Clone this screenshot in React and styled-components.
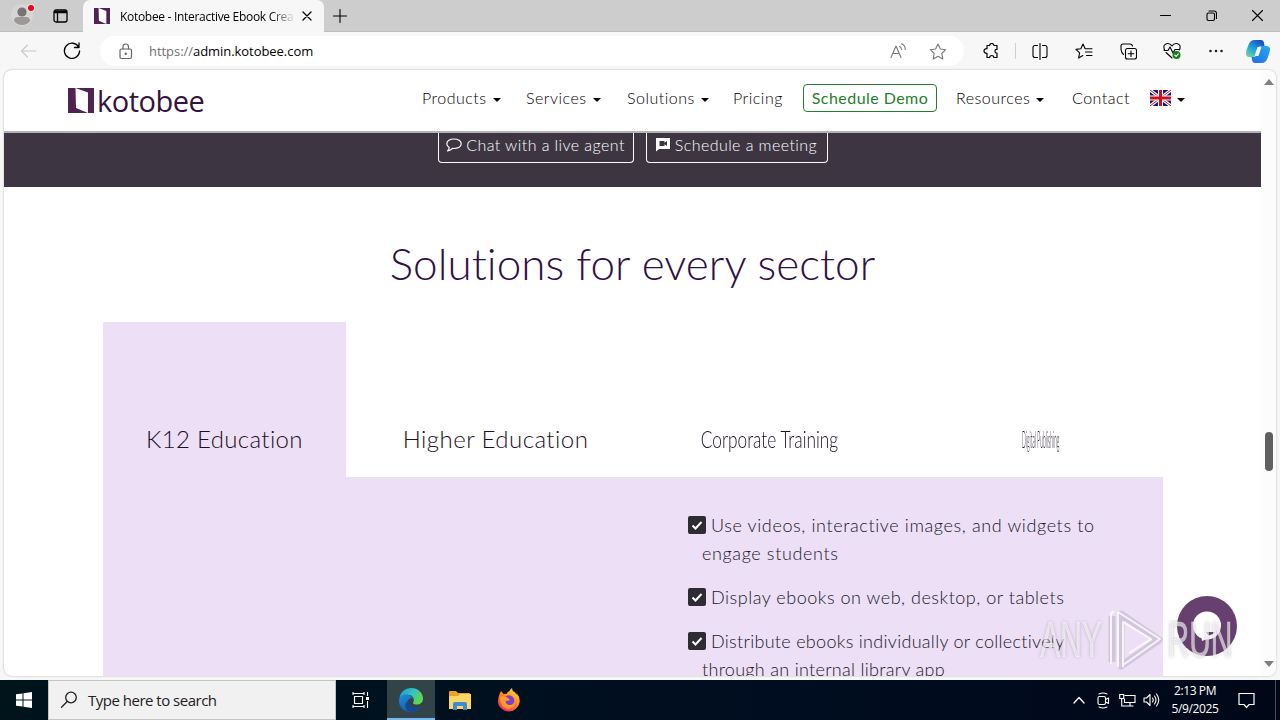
import React from "react";
import styled, { createGlobalStyle } from "styled-components";

const tabs = [
  { label: "K12 Education", width: 243, spacing: 0.35, active: true },
  { label: "Higher Education", width: 299, spacing: 0.45 },
  { label: "Corporate Training", width: 248, spacing: 0, scale: 0.72 },
  { label: "Digital Publishing", width: 296, spacing: 0, scale: 0.21 },
];

const features = [
  { text: "Use videos, interactive images, and widgets to engage students", spacing: 0.62 },
  { text: "Display ebooks on web, desktop, or tablets", spacing: 0.53 },
  {
    text: "Distribute ebooks individually or collectively through an internal library app",
    spacing: 0.3,
  },
];

const Icon = ({ w = 18, h = w, box = `0 0 ${w} ${h}`, children, ...rest }) => (
  <svg
    width={w}
    height={h}
    viewBox={box}
    fill="none"
    stroke="currentColor"
    strokeWidth="1.1"
    strokeLinecap="round"
    strokeLinejoin="round"
    {...rest}
  >
    {children}
  </svg>
);

const BookMark = ({ w, h }) => (
  <svg width={w} height={h} viewBox="0 0 26 25" preserveAspectRatio="none">
    <path fill="#512353" d="M0 0h26v25H0z" />
    <path fill="#fff" d="M7.500 0L20 4.500V25L8 20z" />
  </svg>
);

const TabStrip = () => (
  <Strip>
    <ProfileSlot>
      <Icon w={24} stroke="none">
        <circle cx="11" cy="11" r="11" fill="#d9d5d4" />
        <circle cx="11" cy="8" r="4.600" fill="#777473" />
        <path d="M3 17q0-4 4-4h8q4 0 4 4-3 4-8 4t-8-4z" fill="#9b9897" />
        <circle cx="20" cy="4" r="4" fill="#e9dede" />
        <circle cx="20" cy="4" r="3" fill="#e00b1c" />
      </Icon>
    </ProfileSlot>
    <Icon w={15} h={14} strokeWidth="1.300">
      <rect x="1" y="1" width="13" height="12" rx="2" />
      <path d="M1.500 2.500h12M1.500 3.500h12M4.500 3v10" />
    </Icon>
    <ActiveTab>
      <BookMark w={16} h={16} />
      <TabTitle>Kotobee - Interactive Ebook Crea</TabTitle>
      <Icon w={10} strokeWidth="1.300">
        <path d="M1 1l8 8M9 1L1 9" />
      </Icon>
    </ActiveTab>
    <Icon w={14}>
      <path d="M7 .5v13M.5 7h13" />
    </Icon>
    <WindowButtons>
      <Icon w={11}>
        <path d="M.5 5.500h10" />
      </Icon>
      <Icon w={11}>
        <rect x="1" y="3" width="7.500" height="7.500" rx="1.500" />
        <path d="M3 1h5q2.500 0 2.500 2.500v5" />
      </Icon>
      <Icon w={11}>
        <path d="M.5.5l10 10M10.500.5l-10 10" />
      </Icon>
    </WindowButtons>
  </Strip>
);

const AddressBar = () => (
  <Toolbar>
    <BackSlot>
      <Icon w={17} h={14} stroke="#c8c8c8">
        <path d="M16 7H1.500M7.500 1L1.500 7l6 6" />
      </Icon>
    </BackSlot>
    <Icon w={18} strokeWidth="1.300">
      <path d="M15.700 5.200A7.600 7.600 0 1 0 16.600 9M16 1v4.500h-4.500" />
    </Icon>
    <Pill>
      <Icon w={14} h={17} stroke="#666" strokeWidth="1.200">
        <rect x="1" y="6" width="11.500" height="9.500" rx="1.500" />
        <path d="M4 6V4q0-3 2.750-3T9.500 4v2" />
        <circle cx="6.750" cy="10.800" r=".6" fill="#666" />
      </Icon>
      <Url>
        <span>https://</span>admin.kotobee.com
      </Url>
      <PillActions>
        <Icon w={17} h={16} stroke="#777">
          <path d="M1 14.500L6 3l5 11.500M2.800 10.500h6.400M9.500 3.300q2 1 2 3.200M11.500.8q4 1.800 3.700 5.700" />
        </Icon>
        <Icon w={18} h={17} stroke="#777">
          <path d="M9 1l2.400 5 5.300.7-3.900 3.800 1 5.400L9 13.300 4.200 15.900l1-5.400L1.300 6.700 6.600 6z" />
        </Icon>
      </PillActions>
    </Pill>
    <Actions>
      <Icon w={17} strokeWidth="1.200">
        <path d="M4 2.500h2.500q.5-2 2.300-2t2.200 2H14v4q-2-.3-2 1.700t2 1.800v4.500h-3q-.5-2-2.200-2t-2.300 2H4v-4.200q-3 0-3-2.300t3-2.300z" />
      </Icon>
      <Divider />
      <Icon w={16} h={17}>
        <path d="M8 .5v16M5.500 2.500H3q-2 0-2 2v8q0 2 2 2h2.500M10.500 2.500H13q2 0 2 2v8q0 2-2 2h-2.500" />
      </Icon>
      <Icon w={18} h={16}>
        <path d="M10 5.500L8 1 5.800 5.700 1 6.400l3.600 3.400-1 5.200 4.200-2.400M10.500 5.700H17M10.500 9H17M11.500 12.500H17" />
      </Icon>
      <Icon w={17}>
        <rect x="5.500" y="5.500" width="11" height="10.500" rx="2" />
        <path d="M11 8v5.500M8.200 10.800h5.600M3.500 11.500Q1.500 10 1 6.500V3q0-2 2-2h7q2 0 2.500 2" />
      </Icon>
      <Icon w={18}>
        <path d="M1.500 8Q-.5 2.500 4 1.500q3-.5 5 2.500 2-3 5-2.500 4.500 1 2.500 6.500M3 10.500L9 16M1 8.500h4L7 5l3 6 2-3.500h4" />
        <circle cx="13.500" cy="13" r="4" fill="#15801b" stroke="none" />
        <path d="M11.800 13.200l1.300 1.200 2.200-2.600" stroke="#fff" />
      </Icon>
      <Icon w={14} h={4} fill="#222" stroke="none">
        <circle cx="1.500" cy="2" r="1.300" />
        <circle cx="7" cy="2" r="1.300" />
        <circle cx="12.500" cy="2" r="1.300" />
      </Icon>
    </Actions>
    <Copilot />
  </Toolbar>
);

const Copilot = () => (
  <svg width="24" height="23" viewBox="0 0 24 23">
    <defs>
      <linearGradient id="cpA" x1="0" y1="1" x2=".7" y2="0">
        <stop offset="0" stopColor="#7be08a" />
        <stop offset=".45" stopColor="#27a8dc" />
        <stop offset="1" stopColor="#1453c4" />
      </linearGradient>
      <linearGradient id="cpB" x1="0" y1="1" x2="1" y2="0">
        <stop offset="0" stopColor="#1e6ee8" />
        <stop offset="1" stopColor="#28a8ee" />
      </linearGradient>
    </defs>
    <path fill="url(#cpA)" d="M8 0h7q2.500 0 3 3l.5 3h-4q-2 0-3 3l-1.500 5q-1 3-3 3H4q-4.500 0-4-4 .5-3 2-7Q4 0 8 0z" />
    <path fill="url(#cpB)" d="M16 23H9q-2.500 0-3-3l-.5-3H8q2 0 3-3l1.500-5q1-3 3-3H20q4.500 0 4 4-.5 3-2 7-2 6-6 6z" />
    <path fill="#eefaff" d="M11.500 7h4l-3 9h-4z" />
  </svg>
);

const Flag = () => (
  <svg width="21" height="16" viewBox="0 0 21 16">
    <path fill="#171a75" d="M0 0h21v16H0z" />
    <path stroke="#fff" strokeWidth="3" d="M0 0l21 16M21 0L0 16" />
    <path stroke="#cf1a2b" strokeWidth="1" d="M0 0l21 16M21 0L0 16" />
    <path stroke="#fff" strokeWidth="5" d="M10.500 0v16M0 8h21" />
    <path stroke="#cc1020" strokeWidth="3" d="M10.500 0v16M0 8h21" />
  </svg>
);

const SiteNav = () => (
  <Nav>
    <Brand>
      <BookMark w={26} h={25} />
      <span>kotobee</span>
    </Brand>
    <Menu>
      <NavItem>Products<Caret /></NavItem>
      <NavItem>Services<Caret /></NavItem>
      <NavItem>Solutions<Caret /></NavItem>
      <NavItem>Pricing</NavItem>
      <DemoButton>Schedule Demo</DemoButton>
      <NavItem>Resources<Caret /></NavItem>
      <NavItem>Contact</NavItem>
      <NavItem><Flag /><Caret /></NavItem>
    </Menu>
  </Nav>
);

const CheckBox = () => (
  <CheckSvg width="18" height="18" viewBox="0 0 18 18">
    <rect width="18" height="18" rx="2" fill="#2f2b33" />
    <path d="M4.500 9.500l3 3 6-6.500" fill="none" stroke="#fff" strokeWidth="2" />
  </CheckSvg>
);

const Watermark = () => (
  <Mark>
    <MarkText>ANY</MarkText>
    <svg width="56" height="66" viewBox="0 0 56 66" fill="none" strokeLinejoin="round">
      <g stroke="rgba(110,100,120,.2)" strokeWidth="7">
        <path d="M4 9v46M13 7l38 26-38 26z" />
      </g>
      <path d="M3 57V8q0-3 3-3M10 60V5l42 27-37 26M15 60V15l28 17-22 14" stroke="rgba(255,255,255,.8)" strokeWidth="2" />
    </svg>
    <MarkText>RUN</MarkText>
  </Mark>
);

const Taskbar = () => (
  <Bar>
    <StartButton>
      <svg width="16" height="16" viewBox="0 0 16 16" fill="#fff">
        <path d="M0 2.300L6.500 1.400v6.100H0zM7.500 1.200L16 0v7.500H7.500zM0 8.500h6.500v6.100L0 13.700zM7.500 8.500H16V16l-8.500-1.200z" />
      </svg>
    </StartButton>
    <SearchBox>
      <Icon w={18} strokeWidth="1.300">
        <circle cx="11" cy="6.500" r="5.300" />
        <path d="M7.200 10.500L1.500 16.300" />
      </Icon>
      <span>Type here to search</span>
    </SearchBox>
    <TaskButton>
      <Icon w={17} h={16} strokeLinecap="butt">
        <path d="M1 1.500h11M1 14.500h11M1 0v3M12 0v3M1 13v3M12 13v3M15.500 0v4M15.500 9v7" />
        <rect x="2.500" y="4.500" width="8" height="7" />
        <path d="M14 6.500h3" strokeWidth="3" />
      </Icon>
    </TaskButton>
    <TaskButton $active>
      <svg width="24" height="24" viewBox="0 0 24 24">
        <defs>
          <linearGradient id="eg" x1="0" y1="0" x2="1" y2=".5">
            <stop offset="0" stopColor="#1896d4" />
            <stop offset=".55" stopColor="#35c3c3" />
            <stop offset="1" stopColor="#62d64b" />
          </linearGradient>
          <linearGradient id="eb" x1="0" y1="0" x2=".7" y2="1">
            <stop offset="0" stopColor="#1b8fda" />
            <stop offset="1" stopColor="#1258a8" />
          </linearGradient>
        </defs>
        <path fill="url(#eg)" d="M.5 10C1.500 3.500 6.500 0 12 0c7 0 12 5 12 10.500 0 4-3 6-6.200 6-3.400 0-4.200-1.200-3.500-2.300C16.500 10 12 6 7.500 7 4 7.500 1.500 9 .5 10z" />
        <path fill="url(#eb)" d="M0 13C0 9 3 6.500 7 6.500c4 0 6.500 2.500 7 4.500-3-2-6 1-5 4.500 1.200 4.200 6.500 6 12.500 3.200C19 22 16 24 12 24 5 24 0 19 0 13z" />
        <path fill="#124a91" d="M8.800 12.500c-.8 5 4.500 9.500 12.700 6.200-3 4-7.500 5.700-11 5C5.500 22 5 15.500 8.800 12.500z" />
      </svg>
    </TaskButton>
    <TaskButton>
      <svg width="22" height="19" viewBox="0 0 22 19">
        <path fill="#e8a520" d="M0 1q0-1 1-1h6l2 2h11q1 0 1 1v5H0z" />
        <path fill="#fbd667" d="M0 5h9l2-2h11v15H0z" />
        <path fill="#3b8ecb" d="M4 19v-6q0-2 2-2h10q2 0 2 2v6h-4v-4H8v4z" />
      </svg>
    </TaskButton>
    <TaskButton>
      <svg width="24" height="24" viewBox="0 0 24 24">
        <defs>
          <linearGradient id="fx" x1=".8" y1="0" x2=".2" y2="1">
            <stop offset="0" stopColor="#ffe03a" />
            <stop offset=".45" stopColor="#ff8a1f" />
            <stop offset="1" stopColor="#f5206b" />
          </linearGradient>
        </defs>
        <path fill="url(#fx)" d="M3 5l1-2 2.500 3q2-.5 3 0 .5-2 3-3 1-2 2.500-3 0 3 2.500 4 1 .5 2 3V5q3.500 4 3.200 8.500C22 19 17.500 23.500 12 23.500S1 19 1 13.500Q1 9 3 5z" />
        <circle cx="12" cy="12.500" r="5.200" fill="#7a3fd0" />
        <path fill="#ff9a24" d="M3 9q4-2 8 1l2 2q-2 1-4 1-1 3 3 4 4 .5 6-3 0 7-7 7-8-1-8-12z" />
      </svg>
    </TaskButton>
    <Tray>
      <Icon w={12} h={8} strokeWidth="1.300">
        <path d="M1 7l5-5.500L11 7" />
      </Icon>
      <Icon w={13} h={17}>
        <rect x="1" y="4.500" width="7.500" height="8" rx="1.500" />
        <path d="M8.500 7.500L11.500 6v5.500l-3-1.500M2 2q4-2 8 0M2 15q4 2 8 0" />
      </Icon>
      <Icon w={17} h={14} strokeLinejoin="miter">
        <path d="M6 2.500h10v7H5.500V6M.7 1.500h4v4h-4zM2.700 5.500v7.500h9M11 9.500v3.500M7 13h7" />
      </Icon>
      <Icon w={17} h={14}>
        <path d="M1 5v4h2.500L7 12.500v-11L3.500 5zM9.500 5q1.500 2 0 4M11.500 3q3 4 0 8M13.500 1q4.500 6 0 12" />
      </Icon>
    </Tray>
    <Clock>
      <span>2:13 PM</span>
      <span>5/9/2025</span>
    </Clock>
    <Icon w={17} h={17} strokeWidth="1.200" strokeLinejoin="miter">
      <path d="M1 1.500h15v11h-5L8.500 15.500 6 12.500H1z" />
    </Icon>
    <ShowDesktop />
  </Bar>
);

const App = () => (
  <Screen>
    <GlobalStyle />
    <TabStrip />
    <AddressBar />
    <Viewport>
      <Page>
        <SiteNav />
        <ContactBand>
          <GhostButton $width={196}>
            <Icon w={16} h={14} strokeWidth="1.200">
              <path d="M8 1c4 0 7.200 2 7.200 4.800S12 10.500 8 10.500l-1.500-.1Q5 12.500 1.500 13q1.700-1.500 1.700-3.500Q.8 8 .8 5.800C.8 3 4 1 8 1z" />
            </Icon>
            Chat with a live agent
          </GhostButton>
          <GhostButton $width={182}>
            <Icon w={15} h={14} fill="#fff" stroke="none">
              <path d="M0 0h14v11H3l-3 2.500z" />
              <path fill="#3d3642" d="M3.500 3h5v1.800L11 3v5L8.500 6.200V8h-5z" />
            </Icon>
            Schedule a meeting
          </GhostButton>
        </ContactBand>
        <Heading>Solutions for every sector</Heading>
        <TabRow>
          {tabs.map((tab) => (
            <SectorTab key={tab.label} $width={tab.width} $active={tab.active}>
              <TabLabel $scale={tab.scale} $spacing={tab.spacing}>
                {tab.label}
              </TabLabel>
            </SectorTab>
          ))}
        </TabRow>
        <Panel>
          <FeatureList>
            {features.map(({ text, spacing }) => (
              <Feature key={text} $spacing={spacing}>
                <CheckBox />
                {text}
              </Feature>
            ))}
          </FeatureList>
        </Panel>
      </Page>
      <Scrollbar>
        <ScrollArrow $up />
        <Thumb />
        <ScrollArrow />
      </Scrollbar>
      <ChatBubble>
        <svg width="30" height="30" viewBox="0 0 30 30">
          <circle cx="15" cy="14.500" r="14" fill="#fff" />
          <path fill="#fff" d="M9 22l1 8 10-4z" />
          <path fill="#67406f" d="M14 21h9q-3 4-7 3z" />
        </svg>
      </ChatBubble>
    </Viewport>
    <Watermark />
    <Taskbar />
  </Screen>
);

const GlobalStyle = createGlobalStyle`
  * {
    box-sizing: border-box;
  }

  body {
    margin: 0;
    overflow: hidden;
    font-family: "Open Sans", "Noto Sans", sans-serif;
    color: #000;
  }

  svg {
    display: block;
    flex: none;
  }
`;

const Screen = styled.div`
  position: relative;
  width: 1280px;
  height: 720px;
  display: flex;
  flex-direction: column;
  background-color: #f7f7f7;
`;

const Strip = styled.div`
  height: 32px;
  display: flex;
  align-items: center;
  background-color: #cdcdcd;
  border-bottom: 1px solid #bfbfbf;
`;

const ProfileSlot = styled.div`
  width: 53px;
  padding-left: 11px;
`;

const ActiveTab = styled.div`
  width: 241px;
  height: 32px;
  margin: 0 9px 0 15px;
  padding-left: 11px;
  display: flex;
  align-items: center;
  align-self: flex-start;
  background-color: #f7f7f7;
  border-radius: 7px 7px 0 0;
`;

const TabTitle = styled.span`
  width: 175px;
  margin: 0 7px 0 10px;
  overflow: hidden;
  font-size: 12px;
  letter-spacing: -0.3px;
  white-space: nowrap;
  mask-image: linear-gradient(to right, #000 150px, transparent 176px);
`;

const WindowButtons = styled.div`
  display: flex;
  gap: 35px;
  margin-left: auto;
  margin-right: 17px;
`;

const Toolbar = styled.div`
  height: 38px;
  display: flex;
  align-items: center;
`;

const BackSlot = styled.div`
  width: 63px;
  padding-left: 20px;
`;

const Pill = styled.div`
  width: 864px;
  height: 30px;
  margin-left: 19px;
  padding: 0 17px 0 19px;
  display: flex;
  align-items: center;
  background-color: #fff;
  border-radius: 15px;
`;

const Url = styled.span`
  margin-left: 16px;
  font-size: 13px;
  letter-spacing: -0.05px;

  & > span {
    color: #707070;
  }
`;

const PillActions = styled.div`
  margin-left: auto;
  display: flex;
  gap: 22px;
`;

const Actions = styled.div`
  margin: 0 8px 0 5px;
  display: grid;
  grid-template-columns: 44px 4px 45px 44px 44px 44px 44px;
  align-items: center;
  justify-items: center;
`;

const Divider = styled.div`
  width: 1px;
  height: 16px;
  background-color: #d0d0d0;
`;

const Viewport = styled.div`
  position: relative;
  height: 606px;
  margin: 0 4px;
  display: flex;
  overflow: hidden;
  background-color: #fff;
  border-radius: 8px;
  box-shadow: 0 0 2px #aaa;
`;

const Page = styled.div`
  width: 1257px;
  font-family: Lato, "Open Sans", sans-serif;
  font-weight: 300;
`;

const Nav = styled.div`
  height: 63px;
  display: flex;
  border-bottom: 2px solid #b5b3b7;
`;

const Brand = styled.div`
  width: 418px;
  padding: 18px 0 0 64px;
  display: flex;
  gap: 3px;
  color: #34133c;
  font-family: "Open Sans", sans-serif;
  font-size: 29px;
  font-weight: 400;
  line-height: 26px;
  letter-spacing: -0.5px;
`;

const Menu = styled.div`
  display: grid;
  grid-template-columns: 104px 101px 106px 70px 153px 116px 78px 40px;
  align-items: center;
  height: 56px;
`;

const NavItem = styled.div`
  display: flex;
  align-items: center;
  color: #000;
  font-size: 16px;
  line-height: 18px;
  margin-bottom: 1px;
  letter-spacing: 0.5px;
`;

const Caret = styled.span`
  margin: 4px 0 0 6px;
  border: 4px solid transparent;
  border-top-color: currentColor;
  border-bottom: 0;
`;

const DemoButton = styled.div`
  width: 134px;
  height: 28px;
  border: 1px solid #277d2e;
  border-radius: 4px;
  color: #277d2e;
  font-size: 16px;
  font-weight: 400;
  line-height: 26px;
  letter-spacing: 0.45px;
  text-align: center;
`;

const ContactBand = styled.div`
  height: 54px;
  display: flex;
  justify-content: center;
  gap: 12px;
  background-color: #3d3642;
`;

const GhostButton = styled.div`
  width: ${(props) => props.$width}px;
  height: 30px;
  padding-bottom: 6px;
  display: flex;
  align-items: center;
  justify-content: center;
  gap: 4px;
  border: 1px solid #fff;
  border-top: 0;
  border-radius: 0 0 4px 4px;
  color: #fff;
  font-size: 16px;
  letter-spacing: 0.43px;
  white-space: nowrap;
`;

const Heading = styled.h2`
  height: 135px;
  margin: 0;
  padding-top: 47px;
  color: #2f1046;
  font-size: 44px;
  font-weight: 300;
  line-height: 58px;
  letter-spacing: 0.05px;
  text-align: center;
`;

const TabRow = styled.div`
  margin-left: 99px;
  height: 155px;
  display: flex;
`;

const SectorTab = styled.div`
  width: ${(props) => props.$width}px;
  flex: none;
  padding-top: 100px;
  display: flex;
  justify-content: center;
  background-color: ${(props) => (props.$active ? "#ecdff6" : "transparent")};
`;

const TabLabel = styled.span`
  color: #1b1024;
  font-size: 24px;
  line-height: 34px;
  letter-spacing: ${(props) => props.$spacing}px;
  white-space: nowrap;
  transform: ${(props) => (props.$scale ? `scaleX(${props.$scale})` : "none")};
`;

const Panel = styled.div`
  width: 1060px;
  height: 200px;
  margin-left: 99px;
  padding: 34px 0 0 599px;
  background-color: #ecdff6;
`;

const FeatureList = styled.ul`
  width: 420px;
  margin: 0;
  padding: 0;
  list-style: none;
`;

const Feature = styled.li`
  margin-bottom: 16px;
  color: #21182a;
  font-size: 18px;
  line-height: 28px;
  letter-spacing: ${(props) => props.$spacing}px;
  text-indent: -14px;
`;

const CheckSvg = styled.svg`
  && {
    display: inline-block;
    margin-right: 5px;
    vertical-align: -2px;
  }
`;

const Scrollbar = styled.div`
  width: 15px;
  padding: 9px 0;
  display: flex;
  flex-direction: column;
  align-items: center;
  background-color: #fcfcfc;
`;

const ScrollArrow = styled.div`
  border: 5px solid transparent;
  border-top: ${(props) => (props.$up ? "0" : "6px solid #808080")};
  border-bottom: ${(props) => (props.$up ? "6px solid #808080" : "0")};
`;

const Thumb = styled.div`
  width: 8px;
  height: 39px;
  margin: 347px 0 auto;
  background-color: #606060;
  border-radius: 4px;
`;

const ChatBubble = styled.div`
  position: absolute;
  right: 39px;
  bottom: 20px;
  width: 60px;
  height: 60px;
  display: flex;
  align-items: center;
  justify-content: center;
  background-color: #67406f;
  border-radius: 50%;
`;

const Mark = styled.div`
  position: absolute;
  left: 1039px;
  top: 607px;
  width: 193px;
  height: 66px;
  display: flex;
  align-items: center;
  justify-content: space-between;
`;

const MarkText = styled.span`
  width: 64px;
  display: flex;
  justify-content: center;
  color: rgba(255, 255, 255, 0.6);
  font-family: "Liberation Sans", sans-serif;
  font-size: 50px;
  text-shadow: 0 0 4px rgba(100, 90, 110, 0.45);
  transform: scaleX(0.6);
  -webkit-text-stroke: 1px rgba(255, 255, 255, 0.35);
`;

const Bar = styled.div`
  height: 40px;
  margin-top: auto;
  display: flex;
  align-items: center;
  color: #fff;
  background: linear-gradient(to right, #00141c, #000d20 60%, #000818);
`;

const StartButton = styled.div`
  width: 48px;
  padding-left: 16px;
`;

const SearchBox = styled.div`
  width: 288px;
  height: 40px;
  padding-left: 11px;
  display: flex;
  align-items: center;
  gap: 10px;
  color: #222;
  background-color: #f1f1f1;
  border: 1px solid #c4c4c4;
  font-size: 15px;
  letter-spacing: -0.5px;
`;

const TaskButton = styled.div`
  width: ${(props) => (props.$active ? 48 : 49)}px;
  height: 40px;
  padding-top: ${(props) => (props.$active ? 2 : 0)}px;
  margin-left: ${(props) => (props.$active ? 2 : 0)}px;
  display: flex;
  align-items: center;
  justify-content: center;
  background-color: ${(props) => (props.$active ? "#334448" : "transparent")};
  border-bottom: ${(props) => (props.$active ? "2px solid #76b9ed" : "0")};
`;

const Tray = styled.div`
  margin-left: auto;
  display: grid;
  grid-template-columns: repeat(4, 24px);
  align-items: center;
  justify-items: center;
`;

const Clock = styled.div`
  width: 75px;
  padding-right: 11px;
  display: flex;
  flex-direction: column;
  align-items: center;
  font-size: 12px;
  line-height: 18px;
  letter-spacing: -0.4px;
`;

const ShowDesktop = styled.div`
  width: 5px;
  height: 40px;
  margin-left: 20px;
  border-left: 1px solid #46505c;
`;

export default App;
